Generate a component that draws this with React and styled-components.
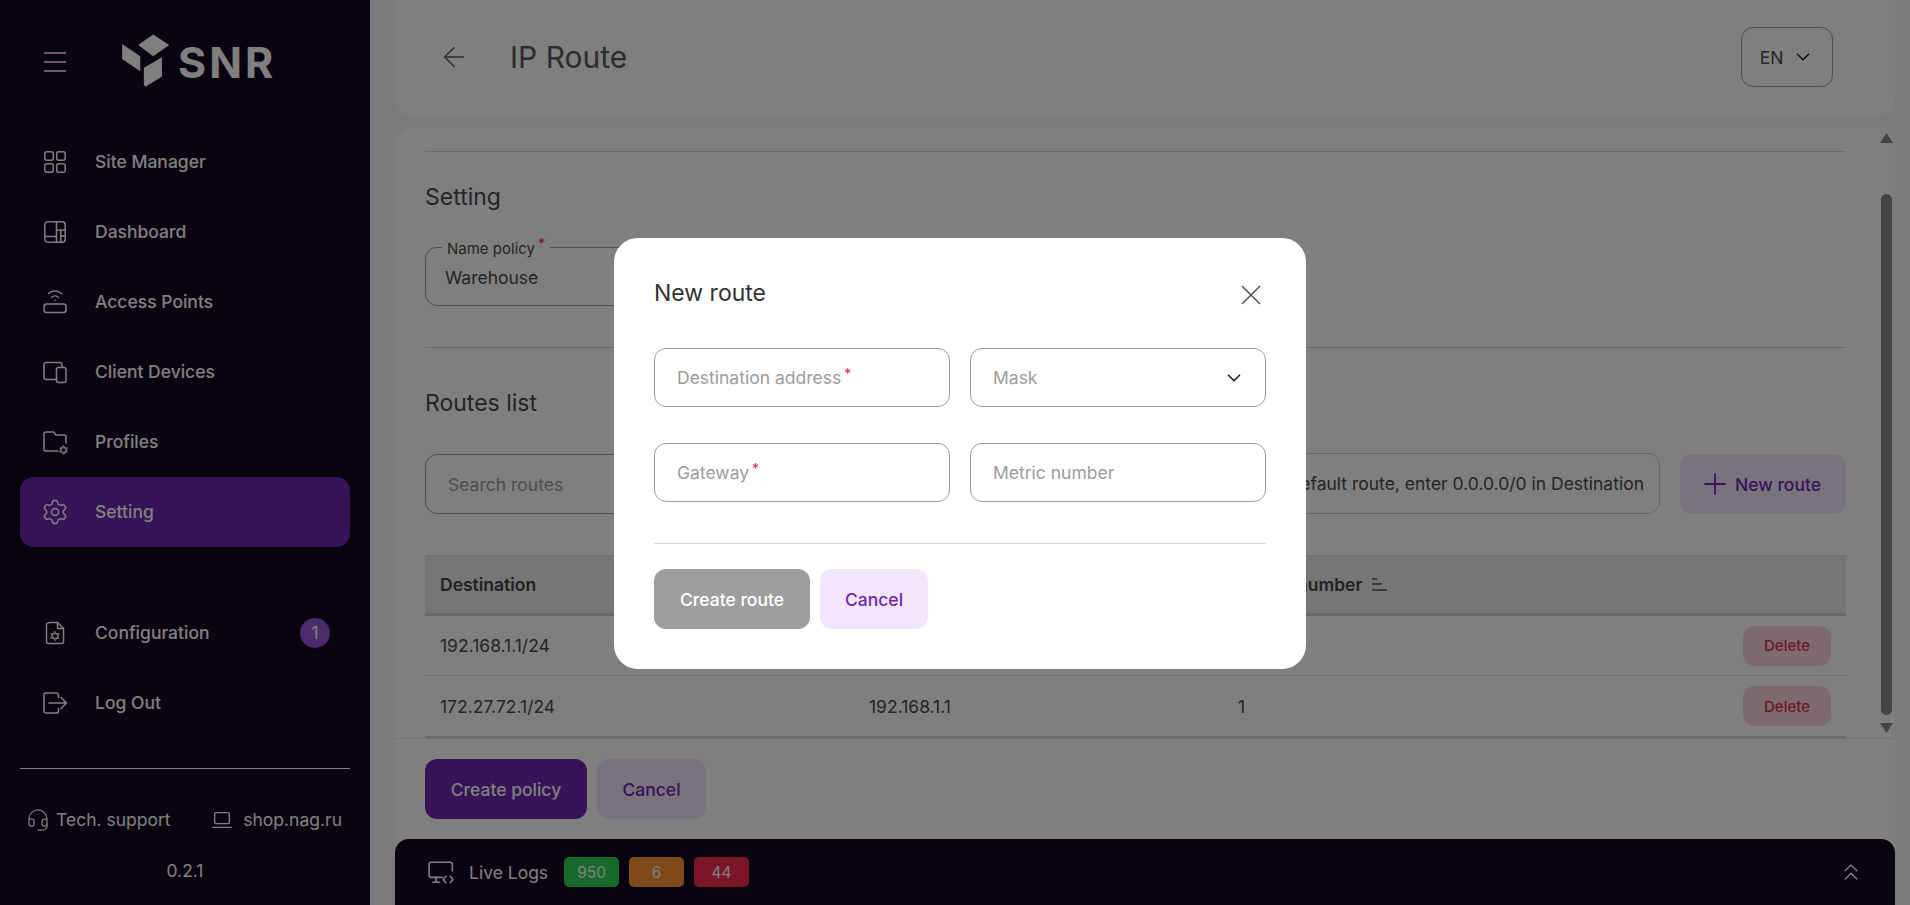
import React from 'react';
import styled, { createGlobalStyle } from 'styled-components';
import { ChevronDown, ChevronsUp, Headset, Plus, Settings, ArrowLeft, X } from 'lucide-react';

const GlobalStyle = createGlobalStyle`
  html, body, #root { margin: 0; height: 100%; }
  body { font-family: Inter, "Liberation Sans", sans-serif; color: #4a4a4a; }
  * { box-sizing: border-box; }
`;

const Shell = styled.div`
  display: flex;
  height: 905px;
  overflow: hidden;
  background: #f6f6f6;
`;

/* sidebar */
const Sidebar = styled.aside`
  width: 370px;
  flex: none;
  display: flex;
  flex-direction: column;
  padding: 0 20px;
  background: #140820;
  color: #fff;
`;

const TopRow = styled.div`
  height: 127px;
  padding: 0 0 3px 24px;
  display: flex;
  align-items: center;
  gap: 55px;
`;

const LogoBox = styled.div`
  display: flex;
  align-items: center;
  gap: 3px;
`;

const LogoText = styled.span`
  font-size: 43px;
  line-height: 44px;
  font-weight: 700;
  letter-spacing: 3px;
`;

const NavGroup = styled.nav`
  display: flex;
  flex-direction: column;
  margin-top: ${(p) => p.$top || 0}px;
`;

const NavItem = styled.div`
  height: 70px;
  padding: 0 20px 1px 23px;
  display: flex;
  align-items: center;
  gap: 28px;
  border-radius: 14px;
  font-size: 17.5px;
  font-weight: 500;
  background: ${(p) => (p.$active ? '#6e28ae' : 'transparent')};
`;

const NavLabel = styled.span`
  flex: 1;
`;

const SettingsIcon = styled(Settings)`
  flex: none;
  margin: 0 -2px;
`;

const CountBadge = styled.span`
  width: 30px;
  height: 30px;
  border-radius: 50%;
  display: flex;
  align-items: center;
  justify-content: center;
  background: #9456d8;
  font-size: 17.5px;
  font-weight: 400;
`;

const SideDivider = styled.div`
  height: 1px;
  margin-top: 30px;
  background: #fff;
`;

const SideFooter = styled.div`
  display: flex;
  justify-content: space-between;
  padding: 0 8px;
  margin-top: 39px;
`;

const FooterLink = styled.span`
  display: flex;
  align-items: center;
  gap: ${(p) => p.$gap}px;
  font-size: 17.5px;
  line-height: 24px;
`;

const HeadsetIcon = styled(Headset)`
  flex: none;
  margin: 0 -2px;
`;

const Version = styled.div`
  margin-top: 27px;
  text-align: center;
  font-size: 17.5px;
  line-height: 24px;
`;

/* main column */
const Main = styled.main`
  flex: 1;
  min-width: 0;
  display: flex;
  flex-direction: column;
  padding: 0 15px 0 25px;
`;

const Header = styled.header`
  height: 117px;
  flex: none;
  display: flex;
  align-items: center;
  gap: 40px;
  padding: 0 62px 3px 43px;
  background: #fff;
  border-radius: 0 0 20px 20px;
`;

const PageTitle = styled.h1`
  flex: 1;
  margin: 0;
  font-size: 30px;
  line-height: 40px;
  font-weight: 400;
  color: #5a5a5a;
`;

const LangSelect = styled.div`
  width: 92px;
  height: 60px;
  display: flex;
  align-items: center;
  justify-content: center;
  gap: 9px;
  border: 1px solid #9c9c9c;
  border-radius: 12px;
  font-size: 17.5px;
  color: #4a4a4a;
`;

const Card = styled.section`
  position: relative;
  flex: 1;
  min-height: 0;
  display: flex;
  flex-direction: column;
  margin-top: 10px;
  background: #fff;
  border-radius: 20px 20px 0 0;
`;

const ScrollArea = styled.div`
  height: 611px;
  flex: none;
  overflow: hidden;
  padding: 24px 49px 0 30px;
`;

const Divider = styled.div`
  height: 1px;
  margin-top: ${(p) => p.$top || 0}px;
  background: #d9d9d9;
`;

const SectionTitle = styled.h2`
  margin: ${(p) => p.$top}px 0 0;
  font-size: 23px;
  line-height: 28px;
  font-weight: 400;
  color: #4a4a4a;
`;

const Outlined = styled.div`
  position: relative;
  height: ${(p) => p.$height || 59}px;
  display: flex;
  align-items: center;
  border: 1px solid #9c9c9c;
  border-radius: 12px;
  font-size: 17.5px;
`;

const PolicyField = styled(Outlined)`
  width: 480px;
  margin-top: 36px;
  padding: 1px 19px 0;
`;

const FloatingLabel = styled.span`
  position: absolute;
  top: -11px;
  left: 16px;
  padding: 0 5px;
  background: #fff;
  font-size: 15px;
  line-height: 20px;
`;

const Star = styled.span`
  margin-left: 3px;
  color: #f0245a;
  font-size: 14px;
  line-height: 1;
  vertical-align: 5px;
`;

const Toolbar = styled.div`
  display: flex;
  gap: 20px;
  margin-top: 37px;
`;

const SearchField = styled(Outlined)`
  width: 420px;
  flex: none;
  height: 60px;
  padding: 0 22px;
  color: #9c9c9c;
`;

const InfoBox = styled(Outlined)`
  flex: 1;
  height: 61px;
  margin-top: -1px;
  justify-content: flex-end;
  padding: 0 15px;
  border-color: #cfcfcf;
  color: #4a4a4a;
`;

const Button = styled.button`
  height: ${(p) => p.$height || 60}px;
  display: inline-flex;
  align-items: center;
  justify-content: center;
  gap: ${(p) => p.$gap || 0}px;
  width: ${(p) => p.$width}px;
  flex: none;
  padding: 0 ${(p) => p.$right || 0}px 0 0;
  border: 0;
  border-radius: 12px;
  font-family: inherit;
  font-size: ${(p) => p.$size || 17.5}px;
  font-weight: 500;
  color: ${(p) => p.$color};
  background: ${(p) => p.$bg};
`;

const Table = styled.div`
  margin-top: 41px;
`;

const TableHead = styled.div`
  height: 61px;
  display: grid;
  grid-template-columns: 429px 369px 1fr;
  align-items: center;
  padding-left: 15px;
  border-top: 1px solid #dddddd;
  border-bottom: 3px solid #d6d6d6;
  background: #ececec;
  font-weight: 600;
  font-size: 17.5px;
  color: #444;
`;

const HeadCell = styled.span`
  display: flex;
  align-items: center;
  gap: 10px;
`;

const TableRow = styled.div`
  height: ${(p) => (p.$last ? 63 : 60)}px;
  display: grid;
  grid-template-columns: 429px 369px 1fr auto;
  align-items: center;
  padding: 0 15px;
  border-bottom: ${(p) => (p.$last ? '3px solid #d6d6d6' : '1px solid #dedede')};
  font-size: 17.5px;
`;

const Actions = styled.div`
  display: flex;
  gap: 10px;
  padding: 20px 30px;
  border-top: 1px solid #e8e8e8;
`;

/* the scrollbar sits over the card edge */
const ScrollTrack = styled.div`
  position: absolute;
  top: 0;
  right: 0;
  width: 18px;
  height: 611px;
  display: flex;
  flex-direction: column;
  align-items: center;
`;

const ScrollThumb = styled.div`
  width: 11px;
  height: 521px;
  margin-top: 51px;
  border-radius: 6px;
  background: #888;
`;

const ArrowShape = styled.svg`
  width: 13px;
  height: 10px;
  fill: #888;
  flex: none;
  margin-top: ${(p) => p.$top}px;
`;

/* live logs */
const LogsBar = styled.footer`
  height: 66px;
  flex: none;
  display: flex;
  align-items: center;
  padding: 0 30px 0 33px;
  background: #140820;
  border-radius: 14px 14px 0 0;
  color: #fff;
  font-size: 17.5px;
`;

const LogsLabel = styled.span`
  margin: 0 16px 0 15px;
`;

const LogBadge = styled.span`
  width: 55px;
  height: 30px;
  margin-right: 10px;
  display: flex;
  align-items: center;
  justify-content: center;
  border-radius: 5px;
  background: ${(p) => p.$bg};
  font-size: 15.5px;
`;

const Spacer = styled.span`
  flex: 1;
`;

/* dialog */
const Overlay = styled.div`
  position: fixed;
  inset: 0;
  display: flex;
  align-items: center;
  justify-content: center;
  padding: 2px 0 0 10px;
  background: rgba(0, 0, 0, 0.5);
`;

const Dialog = styled.div`
  width: 692px;
  padding: 40px;
  background: #fff;
  border-radius: 24px;
`;

const DialogHead = styled.div`
  height: 30px;
  display: flex;
  align-items: center;
  justify-content: space-between;
`;

const DialogTitle = styled.h3`
  margin: 0;
  font-size: 23px;
  line-height: 30px;
  font-weight: 400;
  color: #333;
`;

const CloseIcon = styled(X)`
  flex: none;
  margin: 4px -2px 0 0;
`;

const FormGrid = styled.div`
  display: grid;
  grid-template-columns: 1fr 1fr;
  gap: 36px 20px;
  margin-top: 40px;
`;

const InputField = styled(Outlined)`
  padding: 0 20px 0 22px;
  justify-content: space-between;
  color: #9c9c9c;
`;

const DialogButtons = styled.div`
  display: flex;
  gap: 10px;
  margin-top: 25px;
`;

const Icon = ({ children, size = 24, color = 'currentColor', width = 1.5 }) => (
  <svg width={size} height={size} viewBox="0 0 24 24" fill="none" stroke={color} strokeWidth={width} strokeLinecap="round" strokeLinejoin="round" overflow="visible">
    {children}
  </svg>
);

const GridIcon = () => (
  <Icon>
    <rect x="1.800" y="1.800" width="8.500" height="8.500" rx="2" />
    <rect x="13.700" y="1.800" width="8.500" height="8.500" rx="2" />
    <rect x="1.800" y="13.700" width="8.500" height="8.500" rx="2" />
    <rect x="13.700" y="13.700" width="8.500" height="8.500" rx="2" />
  </Icon>
);

const DashboardIcon = () => (
  <Icon>
    <rect x="1.800" y="1.800" width="20.400" height="20.400" rx="3" />
    <path d="M2 16.500h11.500M13.500 2v20M13.500 10h8.500M17.800 10v12M17.800 16h4" />
  </Icon>
);

const RouterIcon = () => (
  <Icon>
    <rect x="1" y="14" width="22" height="8.500" rx="2.500" />
    <path d="M8.500 7.500a5 5 0 0 1 7 0M5.500 3.500a9.500 9.500 0 0 1 13 0M12 10.500v.01" />
  </Icon>
);

const DevicesIcon = () => (
  <Icon>
    <path d="M19 7V4.500a2 2 0 0 0-2-2H3a2 2 0 0 0-2 2v13a2 2 0 0 0 2 2H13" />
    <rect x="13.500" y="7.500" width="9.500" height="15" rx="2" />
  </Icon>
);

const GearStar = ({ x, y, r }) => (
  <path
    d={`M${x} ${y - r}L${x + r * 0.87} ${y + r / 2}H${x - r * 0.87}zM${x} ${y + r}L${x - r * 0.87} ${y - r / 2}H${x + r * 0.87}z`}
    strokeWidth="1"
  />
);

const FolderGearIcon = () => (
  <Icon>
    <path d="M23 13V7a2 2 0 0 0-2-2h-8l-2.500-3H3a2 2 0 0 0-2 2v15a2 2 0 0 0 2 2h12" />
    <GearStar x={20.500} y={20} r={4.200} />
  </Icon>
);

const FileGearIcon = () => (
  <Icon>
    <path d="M6 1.500h8.500l6 6V20.500a2 2 0 0 1-2 2H5.500a2 2 0 0 1-2-2V4a2 2 0 0 1 2-2z" />
    <path d="M14.500 1.500v6h6" />
    <GearStar x={12} y={15} r={4.500} />
  </Icon>
);

const LogoutIcon = () => (
  <Icon>
    <path d="M15.500 6.500V4a2 2 0 0 0-2-2H3a2 2 0 0 0-2 2v16a2 2 0 0 0 2 2h10.500a2 2 0 0 0 2-2v-2.500" />
    <path d="M6 12h17M18 6.500l5.500 5.500-5.500 5.500" />
  </Icon>
);

const LaptopIcon = () => (
  <Icon size={22}>
    <rect x="4" y="4" width="16" height="12" rx="1.500" />
    <path d="M2 20h20" />
  </Icon>
);

const LogsIcon = () => (
  <Icon size={26}>
    <path d="M22.500 11V5a2 2 0 0 0-2-2H3a2 2 0 0 0-2 2v10a2 2 0 0 0 2 2H13" />
    <path d="M7.500 17v4M4.500 21.500h6M16.500 16l-2.500 3 2.500 3M20.500 16l2.500 3-2.500 3" />
  </Icon>
);

const SortIcon = () => (
  <svg width="16" height="13" viewBox="0 0 16 13" fill="#7a7a7a">
    <rect width="5" height="2" />
    <rect y="5" width="10" height="2" />
    <rect y="11" width="15" height="2" />
  </svg>
);

const Logo = () => (
  <LogoBox>
    <svg width="54" height="58" viewBox="0 0 52 56" fill="#fff">
      <path d="M16.500 11.500L31 1.500l15.500 10L31 22.500z" />
      <path d="M1 10.500L18.500 22.500v14.500L1 25z" />
      <path d="M22 33.500L39.500 23.500v18.500L23.500 52l-1.500-2z" />
    </svg>
    <LogoText>SNR</LogoText>
  </LogoBox>
);

const mainNav = [
  { label: 'Site Manager', icon: <GridIcon /> },
  { label: 'Dashboard', icon: <DashboardIcon /> },
  { label: 'Access Points', icon: <RouterIcon /> },
  { label: 'Client Devices', icon: <DevicesIcon /> },
  { label: 'Profiles', icon: <FolderGearIcon /> },
  { label: 'Setting', icon: <SettingsIcon size={28} strokeWidth={1.3} />, active: true },
];

const routes = [
  { destination: '192.168.1.1/24', gateway: '192.168.1.1', metric: '1' },
  { destination: '172.27.72.1/24', gateway: '192.168.1.1', metric: '1' },
];

const purple = '#6e28ae';
const lilac = '#f2e6fd';

export default function App() {
  return (
    <>
      <GlobalStyle />
      <Shell>
        <Sidebar>
          <TopRow>
            <svg width="22" height="20" viewBox="0 0 22 20" stroke="#fff" strokeWidth="1.500">
              <path d="M0 1h22M0 10h22M0 19h22" />
            </svg>
            <Logo />
          </TopRow>
          <NavGroup>
            {mainNav.map((item) => (
              <NavItem key={item.label} $active={item.active}>
                {item.icon}
                <NavLabel>{item.label}</NavLabel>
              </NavItem>
            ))}
          </NavGroup>
          <NavGroup $top={51}>
            <NavItem>
              <FileGearIcon />
              <NavLabel>Configuration</NavLabel>
              <CountBadge>1</CountBadge>
            </NavItem>
            <NavItem>
              <LogoutIcon />
              <NavLabel>Log Out</NavLabel>
            </NavItem>
          </NavGroup>
          <SideDivider />
          <SideFooter>
            <FooterLink $gap={8}>
              <HeadsetIcon size={24} strokeWidth={1.25} />
              Tech. support
            </FooterLink>
            <FooterLink $gap={10}>
              <LaptopIcon />
              shop.nag.ru
            </FooterLink>
          </SideFooter>
          <Version>0.2.1</Version>
        </Sidebar>

        <Main>
          <Header>
            <ArrowLeft size={32} strokeWidth={1.1} color="#555" />
            <PageTitle>IP Route</PageTitle>
            <LangSelect>
              EN
              <ChevronDown size={22} strokeWidth={1.5} color="#111" />
            </LangSelect>
          </Header>

          <Card>
            <ScrollArea>
              <Divider />
              <SectionTitle $top={31}>Setting</SectionTitle>
              <PolicyField>
                <FloatingLabel>
                  Name policy<Star>*</Star>
                </FloatingLabel>
                Warehouse
              </PolicyField>
              <Divider $top={41} />
              <SectionTitle $top={41}>Routes list</SectionTitle>
              <Toolbar>
                <SearchField>Search routes</SearchField>
                <InfoBox>To add a default route, enter 0.0.0.0/0 in Destination</InfoBox>
                <Button $width={166} $gap={3} $right={7} $bg={lilac} $color={purple}>
                  <Plus size={34} strokeWidth={1.3} />
                  New route
                </Button>
              </Toolbar>
              <Table>
                <TableHead>
                  <HeadCell>Destination</HeadCell>
                  <HeadCell>Gateway</HeadCell>
                  <HeadCell>
                    Metric number
                    <SortIcon />
                  </HeadCell>
                </TableHead>
                {routes.map((route, i) => (
                  <TableRow key={route.destination} $last={i === routes.length - 1}>
                    <span>{route.destination}</span>
                    <span>{route.gateway}</span>
                    <span>{route.metric}</span>
                    <Button $width={88} $height={40} $size={15} $bg="#fbd6de" $color="#e02a52">
                      Delete
                    </Button>
                  </TableRow>
                ))}
              </Table>
            </ScrollArea>
            <ScrollTrack>
              <ArrowShape $top={6} viewBox="0 0 13 10">
                <path d="M6.500 0L13 10H0z" />
              </ArrowShape>
              <ScrollThumb />
              <ArrowShape $top={8} viewBox="0 0 13 10">
                <path d="M0 0h13L6.500 10z" />
              </ArrowShape>
            </ScrollTrack>
            <Actions>
              <Button $width={162} $bg={purple} $color="#fff">Create policy</Button>
              <Button $width={109} $bg={lilac} $color={purple}>Cancel</Button>
            </Actions>
            <LogsBar>
              <LogsIcon />
              <LogsLabel>Live Logs</LogsLabel>
              <LogBadge $bg="#2ed15a">950</LogBadge>
              <LogBadge $bg="#ff9734">6</LogBadge>
              <LogBadge $bg="#f42c4e">44</LogBadge>
              <Spacer />
              <ChevronsUp size={28} strokeWidth={1.2} />
            </LogsBar>
          </Card>
        </Main>
      </Shell>

      <Overlay>
        <Dialog>
          <DialogHead>
            <DialogTitle>New route</DialogTitle>
            <CloseIcon size={34} strokeWidth={1.1} color="#555" />
          </DialogHead>
          <FormGrid>
            <InputField>
              <span>Destination address<Star>*</Star></span>
            </InputField>
            <InputField>
              Mask
              <ChevronDown size={22} strokeWidth={1.8} color="#222" />
            </InputField>
            <InputField>
              <span>Gateway<Star>*</Star></span>
            </InputField>
            <InputField>Metric number</InputField>
          </FormGrid>
          <Divider $top={41} />
          <DialogButtons>
            <Button $width={156} $bg="#9e9e9e" $color="#fff">Create route</Button>
            <Button $width={108} $bg={lilac} $color={purple}>Cancel</Button>
          </DialogButtons>
        </Dialog>
      </Overlay>
    </>
  );
}
